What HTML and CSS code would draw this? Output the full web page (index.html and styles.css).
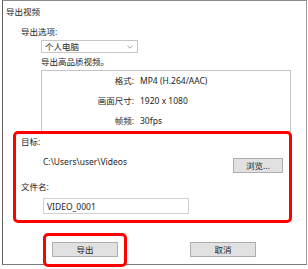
FILE: index.html
```html
<html>
<head>
<meta charset="utf-8">
<link rel="stylesheet" href="styles.css">
</head>
<body>

<div class="window">
  <div class="title">导出视频</div>
  <div class="opt-label">导出选项:</div>
  <div class="select">
    <span>个人电脑</span>
    <svg class="chevron" width="6" height="4" viewBox="0 0 6 4"><path d="M0.5 0.8 L3 3.2 L5.5 0.8" fill="none" stroke="#9a9a9a" stroke-width="0.9"/></svg>
  </div>
  <div class="desc">导出高品质视频。</div>

  <div class="info">
    <div class="info-row"><span class="info-key">格式:</span><span class="info-val">MP4 (H.264/AAC)</span></div>
    <div class="info-row"><span class="info-key">画面尺寸:</span><span class="info-val">1920 x 1080</span></div>
    <div class="info-row"><span class="info-key">帧频:</span><span class="info-val">30fps</span></div>
  </div>

  <div class="target mark">
    <div class="field-label">目标:</div>
    <div class="path-row">
      <span class="path">C:\Users\user\Videos</span>
      <button class="btn browse">浏览...</button>
    </div>
    <div class="field-label name-label">文件名:</div>
    <input class="name-input" type="text" value="VIDEO_0001">
  </div>

  <div class="actions">
    <div class="ring mark">
      <button class="btn wide">导出</button>
    </div>
    <button class="btn wide cancel">取消</button>
  </div>
</div>

</body>
</html>
```

FILE: styles.css
```css
body {
  margin: 0;
  background: #ffffff;
  font-family: "Noto Sans", "Noto Sans CJK SC", sans-serif;
  font-size: 8.5px;
  color: #1e1e1e;
}

.window {
  box-sizing: border-box;
  margin-left: 2px;
  width: 305px;
  height: 265px;
  border-top: 1px solid #8a8a8a;
  border-left: 1px solid #5e5e5e;
  border-right: 1px solid #9a9a9a;
  border-bottom: 1px solid #7a7a7a;
  background: #ffffff;
}

.title {
  height: 22px;
  line-height: 22px;
  padding-left: 3px;
}

.opt-label {
  height: 17px;
  line-height: 17px;
  margin-left: 18px;
}

.select {
  box-sizing: border-box;
  margin-left: 38px;
  width: 97px;
  height: 13px;
  border: 1px solid #c6c6c6;
  display: flex;
  align-items: center;
  justify-content: space-between;
  padding: 0 4px 0 3px;
  line-height: 11px;
}

.desc {
  height: 17px;
  line-height: 17px;
  margin-left: 38px;
}

.info {
  box-sizing: border-box;
  margin-left: 38px;
  width: 250px;
  height: 62px;
  border: 1px solid #c4c4c4;
}

.info-row {
  display: flex;
  height: 20px;
  line-height: 20px;
}

.info-key {
  width: 92px;
  text-align: right;
}

.info-val {
  margin-left: 6px;
}

.mark {
  border: 3px solid #ff0000;
  border-radius: 5px;
  background: #ffffff;
}

.target {
  position: relative;
  margin-top: -1px;
  margin-left: 10px;
  width: 273px;
  height: 86px;
}

.field-label {
  height: 16px;
  line-height: 16px;
  padding-left: 5px;
}

.path-row {
  display: flex;
  justify-content: space-between;
  align-items: flex-start;
  height: 24px;
  padding: 0 6px 0 27px;
}

.path {
  line-height: 24px;
}

.btn {
  box-sizing: border-box;
  height: 15px;
  padding: 0;
  border: 1px solid #adadad;
  background: #e1e1e1;
  font-family: "Noto Sans", "Noto Sans CJK SC", sans-serif;
  font-size: 8.5px;
  color: #1e1e1e;
  line-height: 13px;
}

.browse {
  margin-top: 8px;
  width: 50px;
}

.name-label {
  margin-top: 5px;
}

.name-input {
  box-sizing: border-box;
  margin: 3px 0 0 27px;
  width: 146px;
  height: 16px;
  border: 1px solid #cfcfcf;
  padding: 0 3px;
  font-family: "Noto Sans", "Noto Sans CJK SC", sans-serif;
  font-size: 8.5px;
  color: #1e1e1e;
  outline: none;
}

.actions {
  display: flex;
  align-items: flex-start;
  margin-top: 10px;
}

.ring {
  position: relative;
  margin-left: 40px;
  padding: 6px 6px 7px 6px;
}

.wide {
  width: 66px;
  display: block;
}

.cancel {
  margin-left: 63px;
  margin-top: 9px;
}
```
